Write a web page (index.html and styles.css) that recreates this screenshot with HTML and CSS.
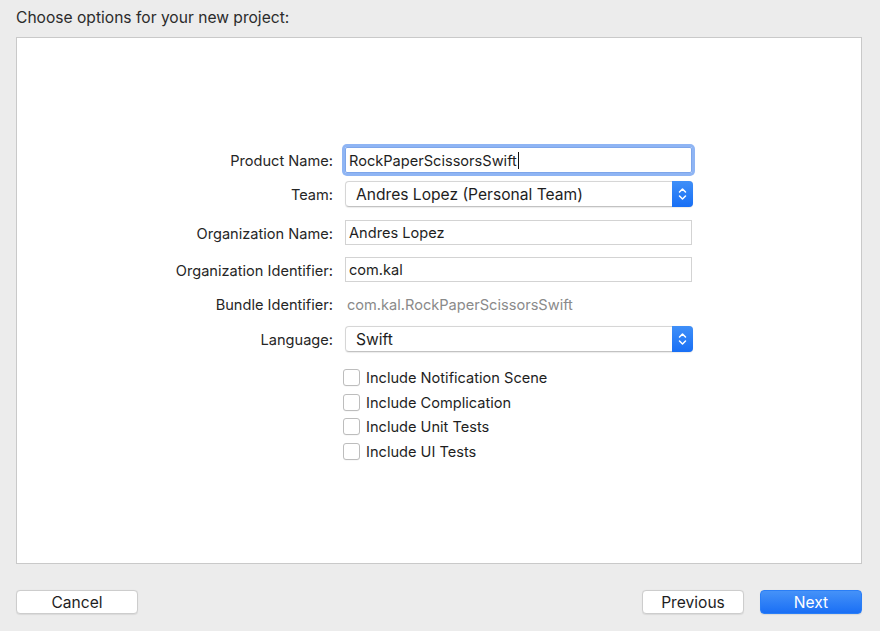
FILE: index.html
```html
<!DOCTYPE html>
<html lang="en">
<head>
    <meta charset="UTF-8">
    <title>Choose options for your new project</title>
    <link rel="stylesheet" href="styles.css">
</head>
<body>
    <div class="title">Choose options for your new project:</div>
    <div class="panel">
        <div class="form">
            <div class="row row-product">
                <div class="label">Product Name:</div>
                <div class="field focused">RockPaperScissorsSwift<span class="caret"></span></div>
            </div>
            <div class="row row-team">
                <div class="label">Team:</div>
                <div class="popup">
                    <span class="popup-text">Andres Lopez (Personal Team)</span>
                    <span class="stepper">
                        <svg width="9" height="16" viewBox="0 0 9 16"><path d="M1.5 6 L4.5 3 L7.5 6 M1.5 10 L4.5 13 L7.5 10" fill="none" stroke="#fff" stroke-width="1.5" stroke-linecap="round" stroke-linejoin="round"/></svg>
                    </span>
                </div>
            </div>
            <div class="row row-org">
                <div class="label">Organization Name:</div>
                <div class="field">Andres Lopez</div>
            </div>
            <div class="row row-orgid">
                <div class="label">Organization Identifier:</div>
                <div class="field">com.kal</div>
            </div>
            <div class="row row-bundle">
                <div class="label">Bundle Identifier:</div>
                <div class="static">com.kal.RockPaperScissorsSwift</div>
            </div>
            <div class="row row-lang">
                <div class="label">Language:</div>
                <div class="popup">
                    <span class="popup-text">Swift</span>
                    <span class="stepper">
                        <svg width="9" height="16" viewBox="0 0 9 16"><path d="M1.5 6 L4.5 3 L7.5 6 M1.5 10 L4.5 13 L7.5 10" fill="none" stroke="#fff" stroke-width="1.5" stroke-linecap="round" stroke-linejoin="round"/></svg>
                    </span>
                </div>
            </div>
            <div class="row row-check">
                <div class="label"></div>
                <div class="check"><span class="box"></span><span class="check-text">Include Notification Scene</span></div>
            </div>
            <div class="row row-check">
                <div class="label"></div>
                <div class="check"><span class="box"></span><span class="check-text">Include Complication</span></div>
            </div>
            <div class="row row-check">
                <div class="label"></div>
                <div class="check"><span class="box"></span><span class="check-text">Include Unit Tests</span></div>
            </div>
            <div class="row row-check">
                <div class="label"></div>
                <div class="check"><span class="box"></span><span class="check-text">Include UI Tests</span></div>
            </div>
        </div>
    </div>
    <div class="footer">
        <div class="button cancel">Cancel</div>
        <div class="right-buttons">
            <div class="button">Previous</div>
            <div class="button primary">Next</div>
        </div>
    </div>
</body>
</html>
```

FILE: styles.css
```css
body{
    margin:0; padding:0;
    width:880px; height:631px;
    background-color: #ececec;
    font-family: Inter, "Liberation Sans", sans-serif;
    font-size: 14.6px;
    color: #262626;
    overflow: hidden;
}
.title{
    height:37px;
    box-sizing: border-box;
    padding: 8px 0 0 16px;
    font-size: 15.6px;
    color: #2b2b2b;
}
.panel{
    margin: 0 18px 0 16px;
    height: 527px;
    box-sizing: border-box;
    border: 1px solid #c9c9c9;
    background-color: #fff;
    padding-top: 109px;
}
.form{
    display: flex;
    flex-direction: column;
}
.row{
    display: flex;
    align-items: center;
}
.label{
    width: 316px;
    text-align: right;
    flex-shrink: 0;
    padding-top: 2px;
}
.row > .field, .row > .popup, .row > .static, .row > .check{
    margin-left: 12px;
}
.row-product{ height:26px; margin-bottom:8px; }
.row-team{ height:26px; margin-bottom:13px; }
.row-org{ height:25px; margin-bottom:12px; }
.row-orgid{ height:25px; margin-bottom:10px; }
.row-bundle{ height:24px; margin-bottom:10px; }
.row-lang{ height:26px; margin-bottom:13px; }
.row-check{ height:24.5px; }

.field{
    width: 347px;
    height: 100%;
    box-sizing: border-box;
    border: 1px solid #d3d3d3;
    padding: 1px 0 0 3px;
    display: flex;
    align-items: center;
    color: #1e1e1e;
}
.field.focused{
    border-color: #7ea6ea;
    border-radius: 2px;
    box-shadow: 0 0 0 3px #8fb5f4;
}
.caret{
    display: inline-block;
    width: 1px;
    height: 17px;
    background-color: #111;
    margin-left: 1px;
}
.popup{
    width: 348px;
    height: 100%;
    box-sizing: border-box;
    border: 1px solid #d6d6d6;
    border-bottom-color: #c2c2c2;
    border-radius: 4px;
    display: flex;
    align-items: center;
    justify-content: space-between;
    box-shadow: 0 0.5px 1px rgba(0,0,0,0.08);
    font-size: 15.6px;
    color: #1e1e1e;
}
.popup-text{
    padding: 1px 0 0 10px;
}
.stepper{
    width: 21px;
    height: calc(100% + 2px);
    margin-right: -1px;
    border-radius: 0 4px 4px 0;
    background: linear-gradient(#3f8ff8, #186ff5);
    display: flex;
    align-items: center;
    justify-content: center;
}
.static{
    padding: 2px 0 0 2px;
    color: #8a8a8a;
}
.check{
    display: flex;
    align-items: center;
    margin-left: 10px !important;
    color: #1e1e1e;
}
.check-text{
    padding-top: 2px;
}
.box{
    width: 17px;
    height: 17px;
    box-sizing: border-box;
    border: 1px solid #bdbdbd;
    border-radius: 3px;
    background-color: #fff;
    margin: 1px 6px 0 0;
    box-shadow: 0 0.5px 0.5px rgba(0,0,0,0.06);
}
.footer{
    display: flex;
    justify-content: space-between;
    margin: 26px 18px 0 16px;
}
.right-buttons{
    display: flex;
    gap: 16px;
}
.button{
    width: 102px;
    height: 24px;
    box-sizing: border-box;
    border: 1px solid #cdcdcd;
    border-radius: 4px;
    background-color: #fff;
    display: flex;
    align-items: center;
    justify-content: center;
    padding-top: 1px;
    font-size: 15.6px;
    color: #1e1e1e;
    box-shadow: 0 0.5px 1px rgba(0,0,0,0.08);
}
.button.cancel{
    width: 122px;
}
.button.primary{
    border-color: #2a7ef6;
    background: linear-gradient(#4592f8, #1a6ff5);
    color: #fff;
}
```
